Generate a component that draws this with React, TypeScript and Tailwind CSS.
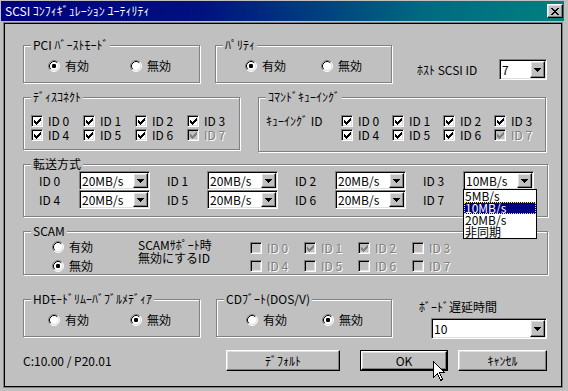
import React from "react";

const sunken =
  "border border-t-[#808080] border-l-[#808080] border-r-white border-b-white shadow-[inset_1px_1px_0_#000,inset_-1px_-1px_0_#dfdfdf]";
const raised =
  "border border-t-white border-l-white border-r-black border-b-black shadow-[inset_-1px_-1px_0_#808080,inset_1px_1px_0_#dfdfdf]";
const dis = "text-[#808080] [text-shadow:1px_1px_0_#fff]";

const CHECK =
  "M6 0h1v1h-1z M5 1h2v1h-2z M0 2h1v1h-1z M4 2h3v1h-3z M0 3h2v1h-2z M3 3h3v1h-3z M0 4h5v1h-5z M1 5h3v1h-3z M2 6h1v1h-1z";

function RadioIcon({ on }: { on?: boolean }) {
  return (
    <svg width="12" height="12" viewBox="0 0 12 12" className="shrink-0">
      <circle cx="6" cy="6" r="5" fill="#fff" />
      <path d="M2.11 9.89A5.5 5.5 0 0 1 9.89 2.11" stroke="#808080" fill="none" />
      <path d="M9.89 2.11A5.5 5.5 0 0 1 2.11 9.89" stroke="#fff" fill="none" />
      <path d="M2.82 9.18A4.5 4.5 0 0 1 9.18 2.82" stroke="#000" fill="none" />
      <path d="M9.18 2.82A4.5 4.5 0 0 1 2.82 9.18" stroke="#dfdfdf" fill="none" />
      {on && <rect x="4" y="4" width="4" height="4" rx="1.2" fill="#000" />}
    </svg>
  );
}

function Radio({ label, on, className = "" }: { label: string; on?: boolean; className?: string }) {
  return (
    <div className={`flex items-center h-[14px] gap-[5px] ${className}`}>
      <RadioIcon on={on} />
      <span className="leading-[14px]">{label}</span>
    </div>
  );
}

function CheckBox({ checked, disabled }: { checked?: boolean; disabled?: boolean }) {
  return (
    <span
      className={`flex items-center justify-center w-[12px] h-[12px] shrink-0 ${sunken} ${
        disabled ? "bg-[#c0c0c0]" : "bg-white"
      }`}
    >
      {checked && (
        <svg width="7" height="7" viewBox="0 0 7 7" shapeRendering="crispEdges">
          <path d={CHECK} fill={disabled ? "#808080" : "#000"} />
        </svg>
      )}
    </span>
  );
}

function CheckItem({ id, checked = true, disabled = false }: { id: number; checked?: boolean; disabled?: boolean }) {
  return (
    <div className="flex items-center h-[12px]">
      <CheckBox checked={checked} disabled={disabled} />
      <span className={`ml-[5px] leading-[12px] whitespace-nowrap ${disabled ? dis : ""}`}>ID {id}</span>
    </div>
  );
}

function Tri() {
  return (
    <svg width="7" height="4" viewBox="0 0 7 4" shapeRendering="crispEdges">
      <path d="M0 0h7v1h-7z M1 1h5v1h-5z M2 2h3v1h-3z M3 3h1v1h-1z" fill="#000" />
    </svg>
  );
}

function Combo({ value, className = "" }: { value: string; className?: string }) {
  return (
    <div className={`flex bg-white ${sunken} ${className}`}>
      <span className="flex-1 pl-[2px] flex items-center leading-none whitespace-nowrap">{value}</span>
      <span className={`m-[1px] w-[15px] flex items-center justify-center bg-[#c0c0c0] ${raised}`}>
        <Tri />
      </span>
    </div>
  );
}

function Group({
  label,
  className = "",
  children,
}: {
  label: string;
  className?: string;
  children?: React.ReactNode;
}) {
  return (
    <div className={`relative shrink-0 border border-[#808080] shadow-[inset_1px_1px_0_#fff,1px_1px_0_#fff] ${className}`}>
      <span className="absolute -top-[8px] left-[7px] px-[2px] bg-[#c0c0c0] leading-[14px] whitespace-nowrap">
        {label}
      </span>
      {children}
    </div>
  );
}

function Button({ label, className = "" }: { label: string; className?: string }) {
  return (
    <div className={`flex items-center justify-center h-[21px] bg-[#c0c0c0] ${raised} ${className}`}>
      <span className="leading-none">{label}</span>
    </div>
  );
}

const rates: [number, string | null][] = [
  [0, "20MB/s"],
  [1, "20MB/s"],
  [2, "20MB/s"],
  [3, "10MB/s"],
  [4, "20MB/s"],
  [5, "20MB/s"],
  [6, "20MB/s"],
  [7, null],
];

export default function App() {
  return (
    <div className="relative w-[568px] h-[391px] overflow-hidden bg-[#c0c0c0] pl-[1px] pt-[1px] font-['Noto_Sans_CJK_JP',sans-serif] text-[12px] leading-[14px] text-black">
      {/* Title bar */}
      <div className="w-[563px] h-[20px] flex items-center pl-[4px] pr-[1px] bg-[linear-gradient(to_right,#000080_0%,#00107f_35%,#006a80_75%,#008080_100%)]">
        <span className="flex-1 text-white leading-none whitespace-nowrap">SCSI ｺﾝﾌｨｷﾞｭﾚｰｼｮﾝ ﾕｰﾃｨﾘﾃｨ</span>
        <div className={`w-[16px] h-[14px] bg-[#c0c0c0] flex items-center justify-center ${raised}`}>
          <svg width="8" height="7" viewBox="0 0 8 7" shapeRendering="crispEdges">
            <path
              d="M0 0h2v1H0z M6 0h2v1H6z M1 1h2v1H1z M5 1h2v1H5z M2 2h4v1H2z M3 3h2v1H3z M2 4h4v1H2z M1 5h2v1H1z M5 5h2v1H5z M0 6h2v1H0z M6 6h2v1H6z"
              fill="#000"
            />
          </svg>
        </div>
      </div>

      {/* Client area */}
      <div className="mt-[1px] ml-[2px] w-[560px] h-[366px] border border-[#808080] shadow-[inset_0_0_0_1px_#000] pl-[19px] flex flex-col">
        {/* Row A */}
        <div className="mt-[22px] flex items-start">
          <Group label="PCI ﾊﾞｰｽﾄﾓｰﾄﾞ" className="w-[177px] h-[38px] flex items-center pt-[4px] pl-[24px]">
            <Radio label="有効" on className="w-[82px]" />
            <Radio label="無効" />
          </Group>
          <Group label="ﾊﾟﾘﾃｨ" className="ml-[15px] w-[177px] h-[38px] flex items-center pt-[4px] pl-[29px]">
            <Radio label="有効" on className="w-[76px]" />
            <Radio label="無効" />
          </Group>
          <span className="ml-[25px] mt-[18px] w-[82px] whitespace-nowrap">ﾎｽﾄ SCSI ID</span>
          <Combo value="7" className="mt-[14px] w-[48px] h-[21px]" />
        </div>

        {/* Row B */}
        <div className="mt-[14px] flex items-start">
          <Group label="ﾃﾞｨｽｺﾈｸﾄ" className="w-[217px] h-[53px] pl-[7px] pt-[17px]">
            <div className="grid grid-cols-[52px_52px_52px_52px] gap-y-[2px]">
              {[0, 1, 2, 3, 4, 5, 6, 7].map((i) => (
                <CheckItem key={i} id={i} disabled={i === 7} />
              ))}
            </div>
          </Group>
          <Group label="ｺﾏﾝﾄﾞｷｭｰｲﾝｸﾞ" className="ml-[18px] w-[288px] h-[55px] pl-[7px] pt-[17px] flex items-start">
            <span className="w-[75px] leading-[12px] whitespace-nowrap">ｷｭｰｲﾝｸﾞ ID</span>
            <div className="grid grid-cols-[51px_51px_51px_51px] gap-y-[2px]">
              {[0, 1, 2, 3, 4, 5, 6, 7].map((i) => (
                <CheckItem key={i} id={i} disabled={i === 7} />
              ))}
            </div>
          </Group>
        </div>

        {/* Row C */}
        <div className="mt-[12px] flex">
          <Group label="転送方式" className="w-[525px] h-[53px] pl-[15px] pt-[6px]">
            <div className="grid grid-cols-[111px_111px_111px_111px] gap-x-[17px]">
              {rates.map(([id, v]) => (
                <div key={id} className="relative flex items-center h-[19px]">
                  <span className="w-[40px] whitespace-nowrap">ID {id}</span>
                  {v && <Combo value={v} className="w-[71px] h-[19px]" />}
                  {id === 3 && (
                    <div className="absolute left-[40px] top-[18px] z-10 w-[74px] border border-black bg-white">
                      <div className="h-[12px] leading-[12px] pl-[1px]">5MB/s</div>
                      <div className="h-[12px] leading-[12px] pl-[1px] bg-[#000080] text-white outline-1 outline-dotted outline-[#ffff00] -outline-offset-1">
                        10MB/s
                      </div>
                      <div className="h-[12px] leading-[12px] pl-[1px]">20MB/s</div>
                      <div className="h-[12px] leading-[12px] pl-[1px]">非同期</div>
                    </div>
                  )}
                </div>
              ))}
            </div>
          </Group>
        </div>

        {/* Row D */}
        <div className="mt-[14px] flex">
          <Group label="SCAM" className="w-[525px] h-[44px] flex items-start">
            <div className="w-[114px] pl-[28px] pt-[8px] flex flex-col gap-[5px]">
              <Radio label="有効" />
              <Radio label="無効" on />
            </div>
            <div className="w-[112px] pt-[6px] leading-[13px] whitespace-nowrap">
              SCAMｻﾎﾟｰﾄ時
              <br />
              無効にするID
            </div>
            <div className="pt-[10px] grid grid-cols-[54px_54px_54px_54px] gap-y-[6px]">
              {[0, 1, 2, 3, 4, 5, 6, 7].map((i) => (
                <CheckItem key={i} id={i} checked={i === 1 || i === 2} disabled />
              ))}
            </div>
          </Group>
        </div>

        {/* Row E */}
        <div className="mt-[24px] flex items-start">
          <Group label="HDﾓｰﾄﾞﾘﾑｰﾊﾞﾌﾞﾙﾒﾃﾞｨｱ" className="w-[177px] h-[38px] flex items-center pt-[4px] pl-[24px]">
            <Radio label="有効" className="w-[82px]" />
            <Radio label="無効" on />
          </Group>
          <Group label="CDﾌﾞｰﾄ(DOS/V)" className="ml-[16px] w-[176px] h-[38px] flex items-center pt-[4px] pl-[29px]">
            <Radio label="有効" className="w-[76px]" />
            <Radio label="無効" on />
          </Group>
          <div className="ml-[27px] flex flex-col">
            <span className="mt-[1px] whitespace-nowrap">ﾎﾞｰﾄﾞ遅延時間</span>
            <Combo value="10" className="ml-[12px] mt-[4px] w-[116px] h-[21px]" />
          </div>
        </div>

        {/* Row F */}
        <div className="mt-[11px] flex items-center">
          <span className="w-[203px] whitespace-nowrap">C:10.00 / P20.01</span>
          <Button label="ﾃﾞﾌｫﾙﾄ" className="w-[114px]" />
          <div className="ml-[20px] w-[88px] h-[21px] border border-black">
            <div className={`w-full h-full flex items-center justify-center bg-[#c0c0c0] ${raised}`}>
              <span className="leading-none">OK</span>
            </div>
          </div>
          <Button label="ｷｬﾝｾﾙ" className="ml-[10px] w-[89px]" />
        </div>
      </div>

      {/* Mouse cursor */}
      <svg
        width="13"
        height="21"
        viewBox="0 0 13 21"
        className="absolute left-[433px] top-[361px] z-20"
        shapeRendering="crispEdges"
      >
        <path
          d="M0.5 0.5 L0.5 16.5 L4.5 12.5 L7.5 19.5 L9.5 18.5 L6.5 11.5 L11.5 11.5 Z"
          fill="#fff"
          stroke="#000"
          strokeWidth="1"
        />
      </svg>
    </div>
  );
}
